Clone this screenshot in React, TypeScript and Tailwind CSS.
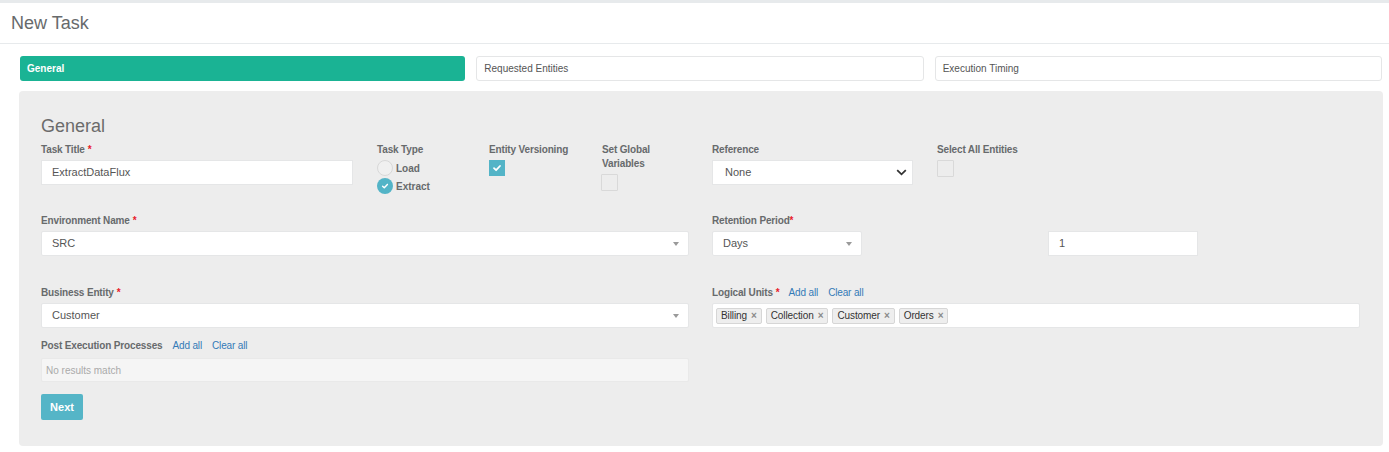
import React from "react";

const font = { fontFamily: '"Liberation Sans", Arial, sans-serif' };

const Req = ({ tight }: { tight?: boolean }) => (
  <span className={`text-[#e8202a] ${tight ? "" : "ml-[3px]"}`}>*</span>
);

const Label = ({ children, className = "" }: { children: React.ReactNode; className?: string }) => (
  <div className={`text-[10px] leading-[14px] font-bold tracking-[-0.15px] text-[#676a6c] ${className}`}>
    {children}
  </div>
);

const Check = ({ size = 9 }: { size?: number }) => (
  <svg width={size} height={size} viewBox="0 0 10 10" fill="none">
    <path d="M2 5.2 4.1 7.2 8 3" stroke="white" strokeWidth="1.8" strokeLinecap="round" strokeLinejoin="round" />
  </svg>
);

const Caret = () => (
  <span className="w-0 h-0 border-l-[3px] border-r-[3px] border-t-[4px] border-l-transparent border-r-transparent border-t-[#9a9a9a]" />
);

const ChosenSelect = ({ value, className = "" }: { value: string; className?: string }) => (
  <div
    className={`h-[25px] bg-white border border-[#e5e6e7] rounded-[2px] flex items-center justify-between pl-[10px] pr-[9px] text-[11px] text-[#555] ${className}`}
  >
    <span>{value}</span>
    <Caret />
  </div>
);

const Tag = ({ label }: { label: string }) => (
  <div className="h-[16px] flex items-center gap-[4px] px-[4px] bg-[#eeeeee] border border-[#d6d6d6] rounded-[2px] text-[10px] tracking-[-0.1px] text-[#333]">
    <span>{label}</span>
    <span className="text-[#8a8a8a] text-[10px] font-bold leading-none">×</span>
  </div>
);

const EmptyBox = () => <div className="w-[17px] h-[17px] border border-[#d9d9d9] rounded-[1px]" />;

const tabs = ["General", "Requested Entities", "Execution Timing"];

export default function App() {
  return (
    <div className="w-[1389px] h-[452px] bg-white overflow-hidden" style={font}>
      <div className="h-[3px] bg-[#e7eaec]" />
      <div className="h-[41px] border-b border-[#e7eaec] flex items-center pl-[11px] text-[18px] text-[#676a6c]">
        New Task
      </div>

      <div className="pl-[19px] pr-[6px] pt-[12px]">
        {/* tabs */}
        <div className="flex gap-[11px] ml-px mr-px">
          {tabs.map((t, i) => (
            <div
              key={t}
              className={`flex-1 h-[25px] flex items-center pl-[7px] rounded-[3px] text-[10px] ${
                i === 0
                  ? "bg-[#1ab394] text-white font-bold"
                  : "bg-white border border-[#e5e6e7] text-[#555]"
              }`}
            >
              {t}
            </div>
          ))}
        </div>

        {/* panel */}
        <div className="mt-[10px] bg-[#ededed] rounded-[4px] pt-[25px] pl-[22px] pr-[23px] pb-[26px]">
          <div className="text-[18px] leading-[20px] text-[#6b6b6b] mb-[7px]">General</div>

          {/* row 1 */}
          <div className="flex gap-[23px] h-[71px]">
            <div className="w-[648px] flex">
              <div className="w-[312px]">
                <Label>
                  Task Title<Req />
                </Label>
                <div className="mt-[3px] h-[25px] bg-white border border-[#e5e6e7] flex items-center pl-[10px] text-[11px] text-[#555]">
                  ExtractDataFlux
                </div>
              </div>
              <div className="w-[112px] ml-[24px]">
                <Label>Task Type</Label>
                <div className="mt-[3px] flex flex-col gap-[2px]">
                  <div className="flex items-center gap-[3px]">
                    <div className="w-[16px] h-[16px] rounded-full border border-[#d8d8d8] bg-[#f0f0f0]" />
                    <span className="text-[10px] font-bold text-[#676a6c]">Load</span>
                  </div>
                  <div className="flex items-center gap-[3px]">
                    <div className="w-[16px] h-[16px] rounded-full bg-[#53b4c7] flex items-center justify-center">
                      <Check size={8} />
                    </div>
                    <span className="text-[10px] font-bold text-[#676a6c]">Extract</span>
                  </div>
                </div>
              </div>
              <div className="w-[112px]">
                <Label>Entity Versioning</Label>
                <div className="mt-[3px] w-[16px] h-[16px] bg-[#53b4c7] flex items-center justify-center">
                  <Check size={10} />
                </div>
              </div>
              <div className="w-[80px]">
                <Label className="pl-px">Set Global Variables</Label>
                <div className="mt-[3px]">
                  <EmptyBox />
                </div>
              </div>
            </div>

            <div className="w-[648px] flex">
              <div className="w-[201px]">
                <Label>Reference</Label>
                <div className="mt-[3px] h-[25px] bg-white border border-[#e5e6e7] flex items-center justify-between pl-[12px] pr-[5px] text-[11px] text-[#555]">
                  <span>None</span>
                  <svg width="11" height="7" viewBox="0 0 11 7" fill="none">
                    <path d="M1.2 1.2 5.5 5.3 9.8 1.2" stroke="#333" strokeWidth="1.8" />
                  </svg>
                </div>
              </div>
              <div className="ml-[24px]">
                <Label>Select All Entities</Label>
                <div className="mt-[3px]">
                  <EmptyBox />
                </div>
              </div>
            </div>
          </div>

          {/* row 2 */}
          <div className="flex gap-[23px] h-[72px]">
            <div className="w-[648px]">
              <Label>
                Environment Name<Req />
              </Label>
              <ChosenSelect value="SRC" className="mt-[3px]" />
            </div>
            <div className="w-[648px] flex">
              <div className="w-[336px]">
                <Label>
                  Retention Period<Req tight />
                </Label>
                <ChosenSelect value="Days" className="mt-[3px] w-[150px]" />
              </div>
              <div className="pt-[17px]">
                <div className="w-[150px] h-[25px] bg-white border border-[#e5e6e7] flex items-center pl-[10px] text-[11px] text-[#555]">
                  1
                </div>
              </div>
            </div>
          </div>

          {/* row 3 */}
          <div className="flex gap-[23px] h-[53px]">
            <div className="w-[648px]">
              <Label>
                Business Entity<Req />
              </Label>
              <ChosenSelect value="Customer" className="mt-[3px]" />
            </div>
            <div className="w-[648px]">
              <div className="flex items-center text-[10px] leading-[14px] tracking-[-0.15px]">
                <span className="font-bold text-[#676a6c]">
                  Logical Units<Req />
                </span>
                <span className="ml-[9px] text-[#337ab7]">Add all</span>
                <span className="ml-[10px] text-[#337ab7]">Clear all</span>
              </div>
              <div className="mt-[3px] h-[25px] bg-white border border-[#e5e6e7] rounded-[2px] flex items-center gap-[4px] pl-[3px]">
                <Tag label="Billing" />
                <Tag label="Collection" />
                <Tag label="Customer" />
                <Tag label="Orders" />
              </div>
            </div>
          </div>

          {/* row 4 */}
          <div className="w-[648px]">
            <div className="flex items-center text-[10px] leading-[14px] tracking-[-0.15px]">
              <span className="font-bold text-[#676a6c]">Post Execution Processes</span>
              <span className="ml-[10px] text-[#337ab7]">Add all</span>
              <span className="ml-[10px] text-[#337ab7]">Clear all</span>
            </div>
            <div className="mt-[5px] h-[24px] bg-[#f5f5f5] border border-[#e9e9e9] rounded-[2px] flex items-center pl-[4px] text-[10px] text-[#aaa]">
              No results match
            </div>
          </div>

          <button className="mt-[12px] h-[26px] w-[42px] bg-[#55b5c7] rounded-[2px] text-white text-[11px] font-bold">
            Next
          </button>
        </div>
      </div>
    </div>
  );
}
